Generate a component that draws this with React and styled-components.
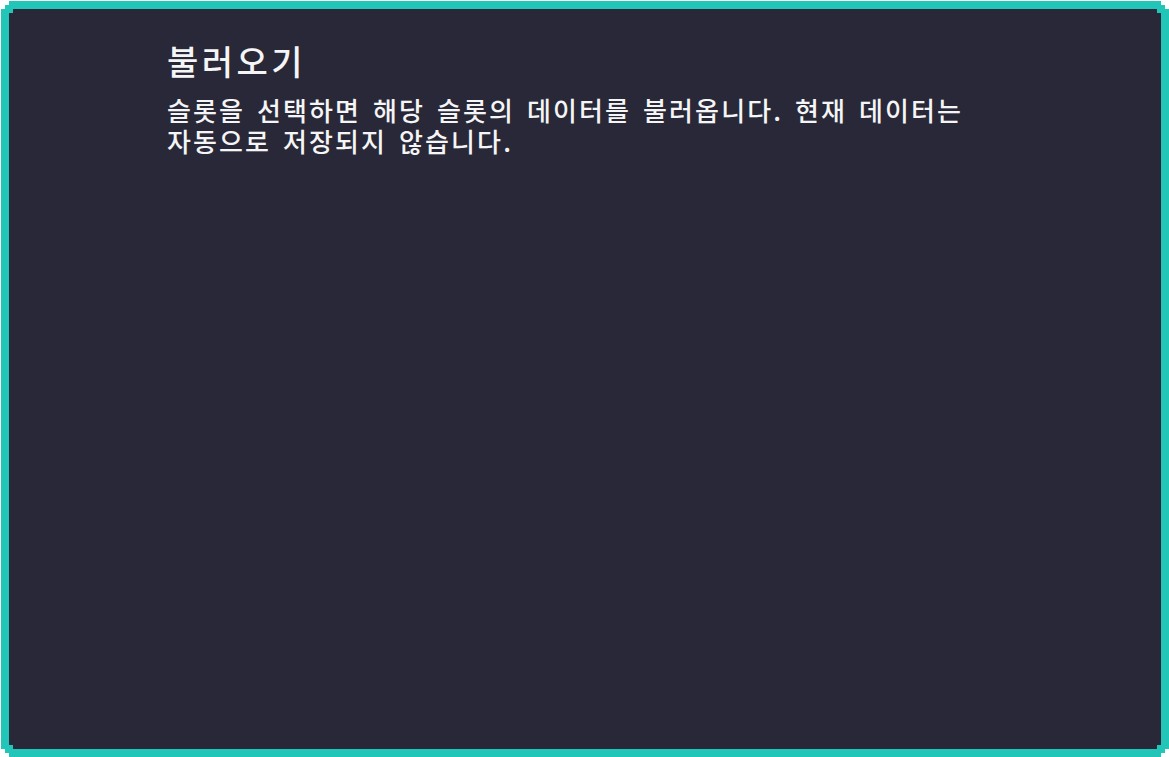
import React from "react";
import styled, { createGlobalStyle } from "styled-components";

const GlobalStyle = createGlobalStyle`
  html, body {
    margin: 0;
    padding: 0;
    background: #ffffff;
  }
  * { box-sizing: border-box; }
`;

const stepped = (s) => `polygon(
  ${s * 2}px 0, calc(100% - ${s * 2}px) 0,
  calc(100% - ${s * 2}px) ${s}px, calc(100% - ${s}px) ${s}px,
  calc(100% - ${s}px) ${s * 2}px, 100% ${s * 2}px,
  100% calc(100% - ${s * 2}px), calc(100% - ${s}px) calc(100% - ${s * 2}px),
  calc(100% - ${s}px) calc(100% - ${s}px), calc(100% - ${s * 2}px) calc(100% - ${s}px),
  calc(100% - ${s * 2}px) 100%, ${s * 2}px 100%,
  ${s * 2}px calc(100% - ${s}px), ${s}px calc(100% - ${s}px),
  ${s}px calc(100% - ${s * 2}px), 0 calc(100% - ${s * 2}px),
  0 ${s * 2}px, ${s}px ${s * 2}px,
  ${s}px ${s}px, ${s * 2}px ${s}px
)`;

const notched = (s) => `polygon(
  ${s}px 0, calc(100% - ${s}px) 0, calc(100% - ${s}px) ${s}px, 100% ${s}px,
  100% calc(100% - ${s}px), calc(100% - ${s}px) calc(100% - ${s}px),
  calc(100% - ${s}px) 100%, ${s}px 100%, ${s}px calc(100% - ${s}px),
  0 calc(100% - ${s}px), 0 ${s}px, ${s}px ${s}px
)`;

const Frame = styled.div`
  margin: 1px 0 0 1px;
  width: 1168px;
  height: 756px;
  padding: 8px;
  background: #21c6b9;
  clip-path: ${stepped(4)};
`;

const Panel = styled.section`
  height: 100%;
  background: #282838;
  clip-path: ${notched(4)};
  padding: 30px 0 0 158px;
  display: flex;
  flex-direction: column;
  gap: 11px;
  font-family: "Noto Sans CJK KR", "Noto Sans", sans-serif;
  color: #f5f5f5;
`;

const Title = styled.h2`
  margin: 0;
  font-size: 34px;
  line-height: 44px;
  font-weight: 500;
  letter-spacing: 3.5px;
`;

const Description = styled.p`
  margin: 0;
  width: 900px;
  font-size: 26px;
  line-height: 31px;
  font-weight: 500;
  letter-spacing: 2.1px;
  word-spacing: 4px;
`;

export default function App() {
  return (
    <>
      <GlobalStyle />
      <Frame>
        <Panel>
          <Title>불러오기</Title>
          <Description>
            슬롯을 선택하면 해당 슬롯의 데이터를 불러옵니다. 현재 데이터는
            <br />
            자동으로 저장되지 않습니다.
          </Description>
        </Panel>
      </Frame>
    </>
  );
}
